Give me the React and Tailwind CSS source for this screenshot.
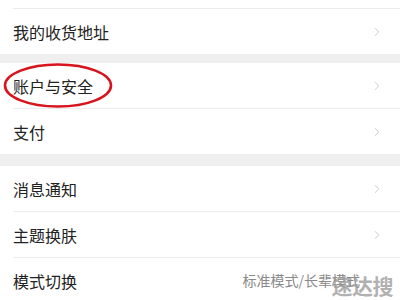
import { ChevronRight } from 'lucide-react';

const font = { fontFamily: '"Noto Sans CJK SC", "Noto Sans", sans-serif' };

function Row({ label, value, arrow = true, divider = true }) {
  return (
    <div className="bg-white">
      <div className="flex items-center h-[45px] pl-[13px] pr-[16px]">
        <span className="text-[16px] text-[#222]">{label}</span>
        <div className="flex-1" />
        {value && <span className="text-[14px] text-[#8a8a8a] mr-[24px]">{value}</span>}
        {arrow && <ChevronRight size={14} strokeWidth={1.5} className="text-[#c4c4c4]" />}
      </div>
      {divider && <div className="ml-[13px] h-px bg-[#ececec]" />}
    </div>
  );
}

export default function App() {
  return (
    <div className="relative w-[400px] h-[300px] overflow-hidden bg-white" style={font}>
      <div className="h-[8px] bg-white" />
      <div className="ml-[13px] h-px bg-[#ececec]" />
      <Row label="我的收货地址" divider={false} />
      <div className="h-[9px] bg-[#efefef]" />
      <Row label="账户与安全" />
      <Row label="支付" divider={false} />
      <div className="h-[12px] bg-[#efefef]" />
      <Row label="消息通知" />
      <Row label="主题换肤" />
      <Row label="模式切换" value="标准模式/长辈模式" arrow={false} divider={false} />

      {/* red marker */}
      <svg className="absolute left-0 top-[62px]" width="120" height="50" viewBox="0 0 120 50">
        <ellipse cx="58" cy="23.5" rx="53" ry="21" fill="none" stroke="#d8141c" strokeWidth="2.6" />
      </svg>

      {/* watermark */}
      <div className="absolute right-[7px] bottom-[4px] text-[21px] font-bold leading-none text-[#9c9c9c]/80 tracking-[-0.5px]">
        速达搜
      </div>
    </div>
  );
}
